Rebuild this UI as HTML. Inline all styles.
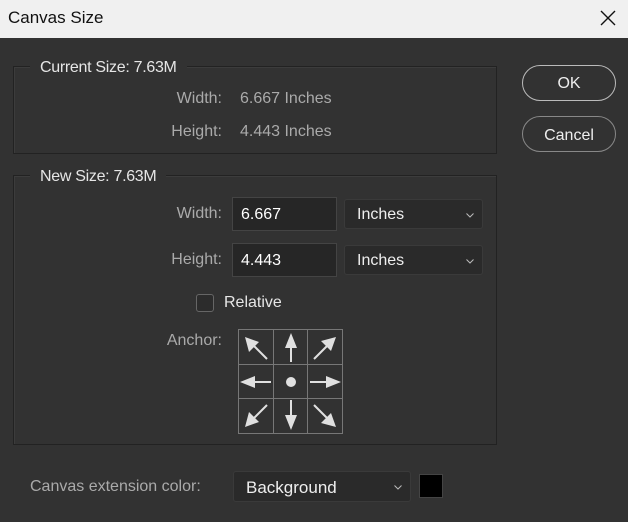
<!DOCTYPE html>
<html><head><meta charset="utf-8"><style>
*{margin:0;padding:0;box-sizing:border-box}
body{width:628px;height:522px;background:#323232;font-family:"Liberation Sans",sans-serif;position:relative;overflow:hidden;color:#ddd}
.a{position:absolute;white-space:nowrap}
.title{left:0;top:0;width:628px;height:38px;background:#f0f0f0;color:#111;font-size:17px}
.box{position:absolute;border:1px solid #222;box-shadow:inset 1px 1px 0 #3c3c3c}
.leg{position:absolute;background:#323232;padding:0 10px;font-size:16px;color:#e6e6e6;letter-spacing:-0.3px}
.lab{font-size:16px;color:#aaa;text-align:right}
.inp{position:absolute;background:#262626;border:1px solid #444;color:#fff;font-size:16px;padding-left:8px;line-height:34px}
.dd{position:absolute;background:#2a2a2a;border:1px solid #3a3a3a;border-radius:3px;color:#eee;font-size:16px;padding-left:12px;line-height:30px}
.dd svg{position:absolute;right:8px;top:13px}
.btn{position:absolute;border:1px solid #bbb;border-radius:18px;color:#eee;font-size:16px;text-align:center}
</style></head><body>
<div class="a title"><span style="position:absolute;left:8px;top:8px">Canvas Size</span>
<svg style="position:absolute;left:600px;top:10px" width="16" height="16"><path d="M1 1L15 15M15 1L1 15" stroke="#111" stroke-width="1.4"/></svg></div>

<div class="box" style="left:13px;top:66px;width:484px;height:88px"></div>
<div class="leg" style="left:30px;top:59px">Current Size: 7.63M</div>
<div class="a lab" style="left:100px;top:90px;width:122px">Width:</div>
<div class="a" style="left:240px;top:90px;font-size:16px;color:#aaa">6.667 Inches</div>
<div class="a lab" style="left:100px;top:123px;width:122px">Height:</div>
<div class="a" style="left:240px;top:123px;font-size:16px;color:#aaa">4.443 Inches</div>

<div class="box" style="left:13px;top:175px;width:484px;height:270px"></div>
<div class="leg" style="left:30px;top:168px">New Size: 7.63M</div>
<div class="a lab" style="left:100px;top:205px;width:122px">Width:</div>
<div class="inp" style="left:232px;top:197px;width:105px;height:34px">6.667</div>
<div class="dd" style="left:344px;top:199px;width:139px;height:30px">Inches<svg width="8" height="5"><path d="M0.5 0.5L4 4L7.5 0.5" stroke="#bbb" fill="none"/></svg></div>
<div class="a lab" style="left:100px;top:251px;width:122px">Height:</div>
<div class="inp" style="left:232px;top:243px;width:105px;height:34px">4.443</div>
<div class="dd" style="left:344px;top:245px;width:139px;height:30px">Inches<svg width="8" height="5"><path d="M0.5 0.5L4 4L7.5 0.5" stroke="#bbb" fill="none"/></svg></div>
<div class="a" style="left:196px;top:294px;width:18px;height:18px;border:1px solid #666;border-radius:3px;background:#2c2c2c"></div>
<div class="a" style="left:224px;top:294px;font-size:16px;color:#e6e6e6">Relative</div>
<div class="a lab" style="left:100px;top:332px;width:122px">Anchor:</div>

<svg class="a" style="left:0;top:0" width="628" height="522">
<g stroke="#777" stroke-width="1" fill="none">
<rect x="238.5" y="329.5" width="104" height="104"/>
<path d="M273.5 329v105M307.5 329v105M238 364.5h105M238 398.5h105"/>
</g>
<g fill="#e0e0e0" stroke="#e0e0e0" stroke-width="2">
<circle cx="291" cy="382" r="5" stroke="none"/>
<path d="M291 362V346" /><path d="M291 333l-6 15h12z" stroke="none"/>
<path d="M291 400V416"/><path d="M291 430l-6-15h12z" stroke="none"/>
<path d="M271 382H253"/><path d="M240 382l15-6v12z" stroke="none"/>
<path d="M310 382H328"/><path d="M341 382l-15-6v12z" stroke="none"/>
<path d="M267 359L254 346"/><path d="M245 337l4 15 10-10z" stroke="none"/>
<path d="M314 359L327 346"/><path d="M336 337l-15 4 10 10z" stroke="none"/>
<path d="M267 405L254 418"/><path d="M245 427l4-15 10 10z" stroke="none"/>
<path d="M314 405L327 418"/><path d="M336 427l-15-4 10-10z" stroke="none"/>
</g>
</svg>

<div class="btn" style="left:522px;top:65px;width:94px;height:36px;line-height:36px">OK</div>
<div class="btn" style="left:522px;top:116px;width:94px;height:36px;line-height:38px;border-color:#888">Cancel</div>

<div class="a" style="left:30px;top:478px;font-size:16px;color:#aaa">Canvas extension color:</div>
<div class="dd" style="left:233px;top:471px;width:178px;height:31px;line-height:31px;font-size:17px">Background<svg width="8" height="5"><path d="M0.5 0.5L4 4L7.5 0.5" stroke="#bbb" fill="none"/></svg></div>
<div class="a" style="left:419px;top:474px;width:24px;height:24px;background:#000;border:1px solid #444"></div>
</body></html>
